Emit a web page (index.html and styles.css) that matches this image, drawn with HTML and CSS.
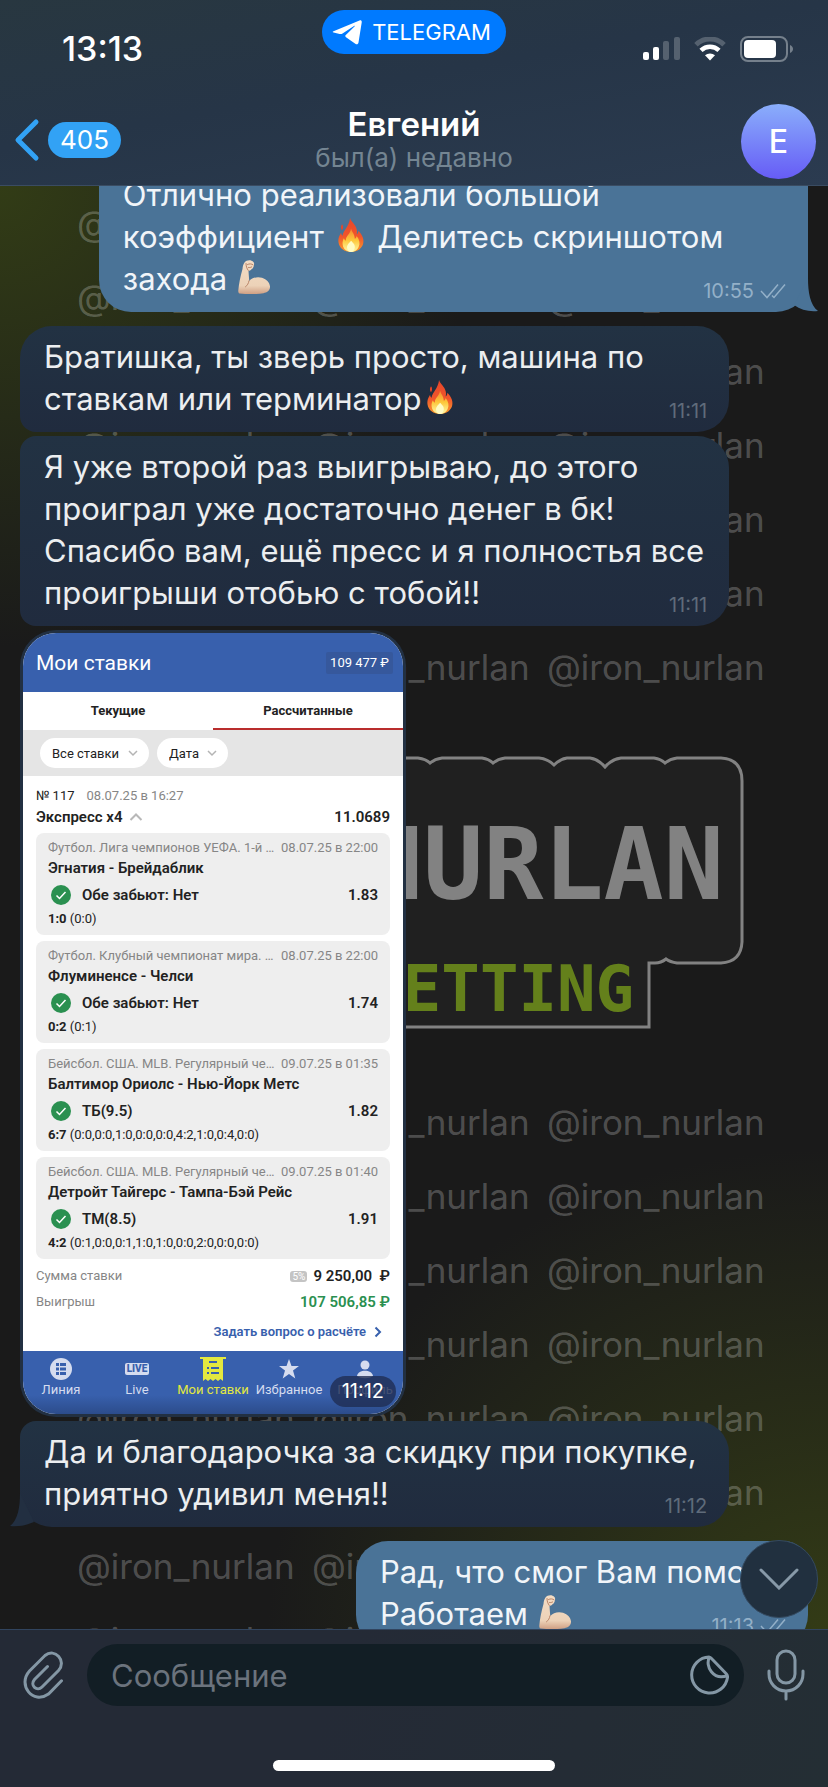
FILE: index.html
```html
<!DOCTYPE html>
<html lang="ru">

<head>
    <meta charset="UTF-8">
    <meta name="viewport" content="width=device-width, initial-scale=1">
    <title>Евгений</title>
    <link rel="stylesheet" href="styles.css">
</head>

<body>
    <!-- Shared icons -->
    <svg class="sprite" aria-hidden="true">
        <defs>
            <linearGradient id="flameOuter" x1="0" y1="0" x2="0" y2="1">
                <stop offset="0" stop-color="#e8452a" />
                <stop offset="0.55" stop-color="#f0562b" />
                <stop offset="1" stop-color="#fb9a2c" />
            </linearGradient>
            <linearGradient id="flameInner" x1="0" y1="0" x2="0" y2="1">
                <stop offset="0" stop-color="#f5862f" />
                <stop offset="0.5" stop-color="#fdc73a" />
                <stop offset="1" stop-color="#fff9a8" />
            </linearGradient>
            <linearGradient id="skin" x1="0" y1="0" x2="0" y2="1">
                <stop offset="0" stop-color="#f3dcc4" />
                <stop offset="0.75" stop-color="#ecd2b8" />
                <stop offset="1" stop-color="#cf9f83" />
            </linearGradient>
        </defs>
        <symbol id="fire" viewBox="0 0 28 36">
            <path fill="url(#flameOuter)" d="M13 0c1 4 6 7 7 12 .6 2.500.3 4 0 5.500 1-.8 1.800-2 1.800-4C25 17 28 21 27 26.500 26 32 21 36 14 36S1.500 32 .8 26C.2 21 2 18 3.500 15.500c.2 1.600.6 2.500 1.500 3.200C6 13 12 9 13 0z" />
            <path fill="#e8452a" d="M4.500 6.500C6 8 5.800 11 4.500 13 3 11.500 3 8.500 4.500 6.500z" />
            <path fill="url(#flameInner)" d="M14 11c1 4 4 6 4 11 1-.5 1.800-1.500 2-3 3 4 4 8 2 12-1.500 3-4.500 5-8 5s-7-2-8.300-5.500C4.500 27 5 24 6.500 21.500c.5 1.500 1 2 2 2.500C8.500 18 13.500 17 14 11z" />
            <path fill="#fffbc4" d="M14 24c2.500 2.500 4.500 4 4 7.500-.4 2.500-2 4.500-4 4.500s-4-2-4.200-4.500C9.600 28 12 27 14 24z" />
        </symbol>
        <symbol id="arm" viewBox="0 0 32 34">
            <path fill="url(#skin)" d="M6.500 2.500C8 .5 11.500-.2 13.500.8c2 .6 3 2 2.500 4-.2 2-1 4-2.800 4.700-.9 1-1.700 1.300-2.700 1.500C10.800 15 11 18.500 11.300 21c2.700-3.200 8-4.800 12.700-3.200 5 1.700 8.200 5.500 8 9.500-.3 3.500-3 5.200-6.500 5.900C18 34.500 8 34.300 1.500 33.500.5 33.200.2 32 .3 30.500.8 24 2.500 16 4.500 9c.2-2.500.7-4.700 2-6.500z" />
            <path fill="none" stroke="#b98468" stroke-width="1" stroke-linecap="round" d="M11 20.800c-.5 2.500-1.500 4.500-3.500 6M9.500 4.500c2-1 4-.8 5.500.3M10.500 7.500c1.200.2 2.300 0 3.200-.6M8 3.500c0 2.500.7 5 2.300 7" />
        </symbol>
        <symbol id="ticks" viewBox="0 0 26 16">
            <path fill="none" stroke="currentColor" stroke-width="1.500" d="M1 8l6 6.500L18 1.500M12 12.500l2 2L25 1.500" />
        </symbol>
        <symbol id="check" viewBox="0 0 20 20">
            <circle cx="10" cy="10" r="10" fill="#2a9050" />
            <path fill="none" stroke="#fff" stroke-width="1.500" d="M5.500 10.500l3 3 6-6.500" />
        </symbol>
        <symbol id="down" viewBox="0 0 10 8">
            <path fill="none" stroke="#b4b4b4" stroke-width="1.500" d="M1 2l4 4 4-4" />
        </symbol>
    </svg>

    <div class="screen">
        <header class="header">
            <div class="status-bar">
                <span class="clock">13:13</span>
                <a class="app-pill" href="#telegram">
                    <svg width="30" height="25" viewBox="0 0 30 25" aria-hidden="true">
                        <path fill="#fff" d="M1.500 11.200L27.500.4c1.500-.6 2.500.3 2.200 2L26.500 22.500c-.3 1.800-1.700 2.300-3.200 1.300L14 17.300c-1-.7-1-1.500-.2-2.300L22.500 6.500c.5-.5.100-.9-.5-.5L10.500 13.500c-1 .6-1.800.7-2.900.4L1.600 12.500c-1.200-.3-1.100-.9-.1-1.300z" />
                    </svg>
                    TELEGRAM
                </a>
                <div class="status-icons">
                    <svg width="37" height="24" viewBox="0 0 37 24" aria-hidden="true">
                        <rect x="0" y="15" width="6" height="8" rx="2" fill="#fff" />
                        <rect x="10" y="10" width="6" height="13" rx="2" fill="#fff" />
                        <rect x="20" y="4" width="6" height="19" rx="2" fill="#55616f" />
                        <rect x="31" y="0" width="6" height="23" rx="2" fill="#55616f" />
                    </svg>
                    <svg width="32" height="24" viewBox="0 0 32 24" aria-hidden="true">
                        <path fill="none" stroke="#55616f" stroke-width="5" d="M2 7.700a20 20 0 0 1 28 0" />
                        <path fill="none" stroke="#fff" stroke-width="4.500" d="M7 13.300a13 13 0 0 1 18 0" />
                        <path fill="#fff" d="M16 23.500l-5-5.200a7.500 7.500 0 0 1 10 0z" />
                    </svg>
                    <svg width="54" height="26" viewBox="0 0 54 26" aria-hidden="true">
                        <rect x="1" y="1" width="46" height="24" rx="7" fill="none" stroke="#75808c" stroke-width="2" />
                        <rect x="4" y="4" width="32" height="18" rx="4" fill="#fff" />
                        <path fill="#75808c" d="M50 9c4 1.500 4 6.500 0 8z" />
                    </svg>
                </div>
            </div>
            <nav class="nav">
                <a class="back" href="#chats" aria-label="Назад">
                    <svg width="26" height="44" viewBox="0 0 26 44" aria-hidden="true">
                        <path fill="none" stroke="#32a2f5" stroke-width="5" stroke-linecap="round" stroke-linejoin="round" d="M22 4L4 22l18 18" />
                    </svg>
                    <span class="unread">405</span>
                </a>
                <div class="peer">
                    <h1>Евгений</h1>
                    <p>был(а) недавно</p>
                </div>
                <a class="avatar" href="#profile">Е</a>
            </nav>
        </header>

        <main class="chat">
            <!-- Wallpaper -->
            <div class="wallpaper" aria-hidden="true">
                <div class="marks">
                    <span>@iron_nurlan</span><span>@iron_nurlan</span><span>@iron_nurlan</span>
                    <span>@iron_nurlan</span><span>@iron_nurlan</span><span>@iron_nurlan</span>
                    <span>@iron_nurlan</span><span>@iron_nurlan</span><span>@iron_nurlan</span>
                    <span>@iron_nurlan</span><span>@iron_nurlan</span><span>@iron_nurlan</span>
                    <span>@iron_nurlan</span><span>@iron_nurlan</span><span>@iron_nurlan</span>
                    <span>@iron_nurlan</span><span>@iron_nurlan</span><span>@iron_nurlan</span>
                    <span>@iron_nurlan</span><span>@iron_nurlan</span><span>@iron_nurlan</span>
                </div>
                <svg class="logo" width="828" height="381" viewBox="0 0 828 381">
                    <path fill="#202020" stroke="#828282" stroke-width="3" d="M360 54h58q8 1 12 5 5-4 12-5h40q7 1 11 5 5-4 12-5h34q9 1 15 7 6-6 13-7h23q8 1 15 9 7-8 16-9h33q7 1 11 5 5-4 12-5h44q21 1 21 23v161q-1 20-21 21h-44q-7-1-11-4-5 4-11 4h-6v64H360z" />
                    <text class="logo-name" x="724" y="195" text-anchor="end">NURLAN</text>
                    <text class="logo-sub" x="634" y="307" text-anchor="end">BETTING</text>
                </svg>
                <div class="marks">
                    <span>@iron_nurlan</span><span>@iron_nurlan</span><span>@iron_nurlan</span>
                    <span>@iron_nurlan</span><span>@iron_nurlan</span><span>@iron_nurlan</span>
                    <span>@iron_nurlan</span><span>@iron_nurlan</span><span>@iron_nurlan</span>
                    <span>@iron_nurlan</span><span>@iron_nurlan</span><span>@iron_nurlan</span>
                    <span>@iron_nurlan</span><span>@iron_nurlan</span><span>@iron_nurlan</span>
                    <span>@iron_nurlan</span><span>@iron_nurlan</span><span>@iron_nurlan</span>
                    <span>@iron_nurlan</span><span>@iron_nurlan</span><span>@iron_nurlan</span>
                    <span>@iron_nurlan</span><span>@iron_nurlan</span><span>@iron_nurlan</span>
                </div>
            </div>

            <div class="messages">
                <div class="bubble out wide scrolled">
                    Отлично реализовали большой<br>
                    коэффициент <svg class="emoji" role="img" aria-label="огонь"><use href="#fire" /></svg> Делитесь скриншотом<br>
                    захода <svg class="emoji" role="img" aria-label="бицепс"><use href="#arm" /></svg>
                    <span class="time">10:55 <svg class="ticks" aria-hidden="true"><use href="#ticks" /></svg></span>
                    <svg class="tail" viewBox="0 0 26 34" aria-hidden="true"><path fill="#4a7397" d="M16 0c0 14 2 27 10 33-9 1-17-1-24-6z" /></svg>
                </div>

                <div class="bubble in wide group-first">
                    Братишка, ты зверь просто, машина по<br>
                    ставкам или терминатор<svg class="emoji" role="img" aria-label="огонь"><use href="#fire" /></svg>
                    <span class="time">11:11</span>
                </div>

                <div class="bubble in wide group-middle">
                    Я уже второй раз выигрываю, до этого<br>
                    проиграл уже достаточно денег в бк!<br>
                    Спасибо вам, ещё пресс и я полностья все<br>
                    проигрыши отобью с тобой!!
                    <span class="time">11:11</span>
                </div>

                <!-- Bet slip photo -->
                <div class="photo">
                    <div class="slip">
                        <div class="slip-header">
                            <h2>Мои ставки</h2>
                            <span class="balance">109 477 ₽</span>
                        </div>
                        <div class="tabs">
                            <button type="button">Текущие</button>
                            <button type="button" class="active">Рассчитанные</button>
                        </div>
                        <div class="filters">
                            <span class="filter">
                                <select aria-label="Ставки"><option>Все ставки</option></select>
                                <svg width="10" height="8" aria-hidden="true"><use href="#down" /></svg>
                            </span>
                            <span class="filter">
                                <select aria-label="Дата"><option>Дата</option></select>
                                <svg width="10" height="8" aria-hidden="true"><use href="#down" /></svg>
                            </span>
                        </div>
                        <div class="slip-body">
                            <div class="slip-number"><span>№ 117</span><span class="muted">08.07.25 в 16:27</span></div>
                            <div class="slip-title">
                                <span>Экспресс x4</span>
                                <svg width="14" height="10" viewBox="0 0 14 10" aria-hidden="true"><path fill="none" stroke="#b8b8b8" stroke-width="2" d="M1.500 8L7 2.500 12.500 8" /></svg>
                                <span class="odds">11.0689</span>
                            </div>

                            <div class="bets">
                                <div class="bet">
                                    <div class="league"><span>Футбол. Лига чемпионов УЕФА. 1-й …</span><span>08.07.25 в 22:00</span></div>
                                    <div class="teams">Эгнатия - Брейдаблик</div>
                                    <div class="pick"><svg width="20" height="20" aria-hidden="true"><use href="#check" /></svg><span>Обе забьют: Нет</span><span class="odds">1.83</span></div>
                                    <div class="score"><b>1:0</b> (0:0)</div>
                                </div>
                                <div class="bet">
                                    <div class="league"><span>Футбол. Клубный чемпионат мира. …</span><span>08.07.25 в 22:00</span></div>
                                    <div class="teams">Флуминенсе - Челси</div>
                                    <div class="pick"><svg width="20" height="20" aria-hidden="true"><use href="#check" /></svg><span>Обе забьют: Нет</span><span class="odds">1.74</span></div>
                                    <div class="score"><b>0:2</b> (0:1)</div>
                                </div>
                                <div class="bet">
                                    <div class="league"><span>Бейсбол. США. MLB. Регулярный че…</span><span>09.07.25 в 01:35</span></div>
                                    <div class="teams">Балтимор Ориолс - Нью-Йорк Метс</div>
                                    <div class="pick"><svg width="20" height="20" aria-hidden="true"><use href="#check" /></svg><span>ТБ(9.5)</span><span class="odds">1.82</span></div>
                                    <div class="score"><b>6:7</b> (0:0,0:0,1:0,0:0,0:0,4:2,1:0,0:4,0:0)</div>
                                </div>
                                <div class="bet">
                                    <div class="league"><span>Бейсбол. США. MLB. Регулярный че…</span><span>09.07.25 в 01:40</span></div>
                                    <div class="teams">Детройт Тайгерс - Тампа-Бэй Рейс</div>
                                    <div class="pick"><svg width="20" height="20" aria-hidden="true"><use href="#check" /></svg><span>ТМ(8.5)</span><span class="odds">1.91</span></div>
                                    <div class="score"><b>4:2</b> (0:1,0:0,0:1,1:0,1:0,0:0,2:0,0:0,0:0)</div>
                                </div>
                            </div>

                            <div class="total"><span>Сумма ставки</span><span class="percent">5%</span><b>9 250,00 &nbsp;₽</b></div>
                            <div class="total"><span>Выигрыш</span><b class="win">107 506,85 ₽</b></div>
                            <a class="ask" href="#ask">Задать вопрос о расчёте
                                <svg width="8" height="12" viewBox="0 0 8 12" aria-hidden="true"><path fill="none" stroke="#3860ad" stroke-width="2" d="M1.500 1.500L6 6l-4.500 4.500" /></svg>
                            </a>
                        </div>
                        <nav class="slip-nav">
                            <a href="#line">
                                <svg width="22" height="22" viewBox="0 0 22 22" aria-hidden="true"><circle cx="11" cy="11" r="11" fill="#d5dcef" /><path fill="#3860ad" d="M6 5h3v3H6zM10 5h6v3h-6zM6 9.500h3v3H6zM10 9.500h6v3h-6zM6 14h3v3H6zM10 14h6v3h-6z" /></svg>
                                Линия
                            </a>
                            <a href="#live">
                                <span class="live">LIVE</span>
                                Live
                            </a>
                            <a href="#bets" class="active">
                                <svg width="26" height="24" viewBox="0 0 26 24" aria-hidden="true"><path fill="#e3e83f" d="M0 0h26v2h-3v22l-2.500-2-2.500 2-2.500-2-2.500 2-2.500-2L8 24l-2.500-2L3 24V2H0z" /><path fill="#3860ad" d="M9 4h8v2H9zM7 10h2v2H7zM11 10h8v2h-8zM7 15h2v2H7zM11 15h8v2h-8z" /></svg>
                                Мои ставки
                            </a>
                            <a href="#favorites">
                                <svg width="22" height="22" viewBox="0 0 22 22" aria-hidden="true"><path fill="#d5dcef" d="M11 1l2.500 7H21l-6 4.500 2.300 8L11 16l-6.300 4.500 2.300-8L1 8h7.500z" /></svg>
                                Избранное
                            </a>
                            <a href="#profile">
                                <svg width="18" height="20" viewBox="0 0 18 20" aria-hidden="true"><circle cx="9" cy="6" r="4.500" fill="#d5dcef" /><path fill="#d5dcef" d="M1 17c1-7 15-7 16 0-4 3-12 3-16 0z" /></svg>
                                Профиль
                            </a>
                        </nav>
                    </div>
                    <span class="photo-time">11:12</span>
                </div>

                <div class="bubble in wide group-last">
                    Да и благодарочка за скидку при покупке,<br>
                    приятно удивил меня!!
                    <span class="time">11:12</span>
                    <svg class="tail" viewBox="0 0 26 34" aria-hidden="true"><path fill="#222f41" d="M10 0c0 14-2 27-10 33 9 1 17-1 24-4z" /></svg>
                </div>

                <div class="bubble out last">
                    Рад, что смог Вам помочь<br>
                    Работаем <svg class="emoji" role="img" aria-label="бицепс"><use href="#arm" /></svg>
                    <span class="time">11:13 <svg class="ticks" aria-hidden="true"><use href="#ticks" /></svg></span>
                </div>
            </div>

            <button type="button" class="scroll-down" aria-label="Вниз">
                <svg width="40" height="22" viewBox="0 0 40 22" aria-hidden="true"><path fill="none" stroke="#8799a8" stroke-width="3" stroke-linecap="round" d="M2 2l18 18L38 2" /></svg>
            </button>
        </main>

        <footer class="composer">
            <div class="composer-row">
                <button type="button" class="icon-button" aria-label="Прикрепить">
                    <svg width="41" height="48" viewBox="0 0 41 48" aria-hidden="true">
                        <path fill="none" stroke="#8497a5" stroke-width="3" stroke-linecap="round" d="M24.500 15.500L11.500 28.500c-5 6 2.500 12.500 7.500 7.500L35.500 19.500C44 10 32 -3.500 22 4.500L6.500 20C-6 34 10 54 25.500 43L38.500 29.800" />
                    </svg>
                </button>
                <div class="field">
                    <input type="text" placeholder="Сообщение" aria-label="Сообщение">
                    <button type="button" class="icon-button" aria-label="Стикеры">
                        <svg width="40" height="40" viewBox="0 0 40 40" aria-hidden="true">
                            <path fill="none" stroke="#8497a5" stroke-width="3" stroke-linejoin="round" d="M19 2a18 18 0 1 0 18.500 20.500c.2-1.500 0-2.500-1-3.500L22 4c-1-1.200-1.700-2-3-2zM19.500 2c-5 9 4 24 18 18.500" />
                        </svg>
                    </button>
                </div>
                <button type="button" class="icon-button" aria-label="Голосовое сообщение">
                    <svg width="38" height="52" viewBox="0 0 38 52" aria-hidden="true">
                        <rect x="10" y="2" width="18" height="32" rx="9" fill="none" stroke="#8497a5" stroke-width="3" />
                        <path fill="none" stroke="#8497a5" stroke-width="3" stroke-linecap="round" d="M2 22v3c0 9 7 17 17 17s17-8 17-17v-3M19 42v8" />
                    </svg>
                </button>
            </div>
            <div class="home-indicator"></div>
        </footer>
    </div>
</body>

</html>
```

FILE: styles.css
```css
* {
    box-sizing: border-box;
}

body {
    margin: 0;
    background-color: #1a1a1a;
    font-family: Inter, "Liberation Sans", sans-serif;
    color: #fff;
}

h1,
h2,
p {
    margin: 0;
    font-weight: 400;
}

a {
    color: inherit;
    text-decoration: none;
}

button {
    padding: 0;
    border: none;
    background: none;
    font: inherit;
    color: inherit;
    cursor: pointer;
}

svg {
    flex: none;
}

.sprite {
    position: absolute;
    width: 0;
    height: 0;
}

.screen {
    display: flex;
    flex-direction: column;
    height: 100vh;
}

/* Header */
.header {
    flex: none;
    background: linear-gradient(170deg, #283740 0%, #263547 45%, #2b3b50 100%);
    border-bottom: 1px solid #3a4c62;
}

.status-bar {
    display: grid;
    grid-template-columns: 1fr auto 1fr;
    align-items: end;
    min-height: 65px;
    padding: 10px 34px 0;
}

.clock {
    padding-left: 28px;
    font-size: 34px;
    line-height: 32px;
    font-weight: 500;
}

.app-pill {
    align-self: start;
    display: flex;
    align-items: center;
    gap: 10px;
    height: 44px;
    padding: 0 15px 0 10px;
    border-radius: 22px;
    background-color: #007aff;
    font-size: 22px;
}

.status-icons {
    display: flex;
    align-items: center;
    justify-content: flex-end;
    gap: 14px;
    padding-bottom: 3px;
}

.nav {
    display: grid;
    grid-template-columns: 1fr auto 1fr;
    align-items: center;
    padding: 39px 12px 6px;
}

.back {
    display: flex;
    align-items: center;
    gap: 8px;
    padding: 0 0 4px 2px;
}

.unread {
    padding: 0 12px;
    border-radius: 18px;
    background-color: #32a2f5;
    font-size: 26px;
    line-height: 36px;
}

.peer {
    padding-bottom: 4px;
    text-align: center;
}

.peer h1 {
    font-size: 33px;
    line-height: 36px;
    font-weight: 600;
}

.peer p {
    font-size: 26px;
    line-height: 32px;
    color: #748592;
}

.avatar {
    justify-self: end;
    width: 75px;
    border-radius: 50%;
    background: linear-gradient(#8aaefb, #665cf6);
    font-size: 32px;
    line-height: 75px;
    font-weight: 500;
    text-align: center;
}

/* Chat */
.chat {
    position: relative;
    flex: 1;
    min-height: 0;
    overflow: hidden;
    background:
        radial-gradient(ellipse 480px 460px at 0 0, #323c16, transparent),
        radial-gradient(ellipse 560px 480px at 100% 100%, #333b16, transparent),
        #1a1a1a;
}

.wallpaper {
    position: absolute;
    inset: 0;
    overflow: hidden;
}

.marks {
    display: grid;
    grid-template-columns: repeat(3, 235px);
    padding-left: 77px;
    font-size: 35px;
    line-height: 74px;
    color: rgba(255, 255, 255, 0.24);
}

.logo {
    display: block;
}

.logo-name,
.logo-sub {
    font-family: "DejaVu Sans Mono", monospace;
    font-weight: 700;
}

.logo-name {
    font-size: 100px;
    fill: #828282;
}

.logo-sub {
    font-size: 64px;
    fill: #64801b;
}

.messages {
    position: relative;
    display: flex;
    flex-direction: column;
    align-items: flex-start;
    gap: 4px;
    margin-top: -22px;
    padding: 0 20px;
}

.bubble {
    position: relative;
    padding: 10px 24px 12px;
    border-radius: 32px;
    font-size: 31px;
    line-height: 42px;
    white-space: nowrap;
}

.wide {
    width: 90%;
}

.in {
    background: linear-gradient(#223243, #202b3e);
    color: #eceef0;
}

.out {
    align-self: flex-end;
    background-color: #4a7397;
    color: #f1f5f9;
}

/* The top of this one is scrolled under the header */
.scrolled {
    margin-bottom: 10px;
    border-top-left-radius: 16px;
    border-top-right-radius: 16px;
}

.group-first {
    border-bottom-left-radius: 16px;
}

.group-middle {
    border-top-left-radius: 16px;
    border-bottom-left-radius: 16px;
}

.group-last {
    margin-bottom: 10px;
    border-top-left-radius: 16px;
}

.last {
    min-width: 452px;
    border-top-right-radius: 24px;
}

.emoji {
    width: 32px;
    height: 34px;
    margin: 0 2px;
    vertical-align: -4px;
}

.time {
    float: right;
    display: flex;
    align-items: center;
    gap: 6px;
    margin: 18px -2px -8px 0;
    font-size: 20px;
    line-height: 30px;
    color: #5f6b7a;
}

.out .time {
    color: #93b0c8;
}

.ticks {
    width: 26px;
    height: 16px;
}

.tail {
    position: absolute;
    bottom: 0;
    width: 26px;
    height: 34px;
}

.out .tail {
    right: -10px;
}

.in .tail {
    left: -10px;
}

.scroll-down {
    position: absolute;
    right: 10px;
    bottom: 11px;
    display: flex;
    align-items: center;
    justify-content: center;
    width: 78px;
    height: 78px;
    border: 1px solid #34495f;
    border-radius: 50%;
    background-color: #21303f;
}

/* Bet slip */
.photo {
    position: relative;
    width: 386px;
    padding: 3px;
    border-radius: 36px;
    background-color: #223042;
}

.slip {
    overflow: hidden;
    border-radius: 33px;
    background-color: #fff;
    font-family: Roboto, sans-serif;
    font-size: 13px;
    color: #222;
}

.slip-header {
    display: flex;
    align-items: center;
    justify-content: space-between;
    height: 59px;
    padding: 0 10px 0 13px;
    background-color: #3860ad;
    color: #fff;
}

.slip-header h2 {
    font-size: 21px;
}

.balance {
    padding: 0 4px;
    border-radius: 2px;
    background-color: #36589c;
    line-height: 22px;
}

.tabs {
    display: grid;
    grid-template-columns: 1fr 1fr;
}

.tabs button {
    height: 38px;
    border-bottom: 2px solid transparent;
    font-weight: 700;
}

.tabs .active {
    border-color: #b92d2d;
}

.filters {
    display: flex;
    gap: 8px;
    padding: 8px 17px;
    background-color: #e5e5e5;
}

.filter {
    display: flex;
    align-items: center;
    gap: 8px;
    height: 30px;
    padding: 0 11px 0 12px;
    border-radius: 15px;
    background-color: #fff;
}

.filter select {
    padding: 0;
    border: none;
    background: none;
    appearance: none;
    font: inherit;
    color: inherit;
}

.slip-body {
    display: flex;
    flex-direction: column;
    padding: 9px 13px 2px;
}

.slip-number {
    display: flex;
    gap: 12px;
    line-height: 21px;
}

.muted,
.league,
.total span {
    color: #868686;
}

.slip-title {
    display: flex;
    align-items: center;
    gap: 7px;
    font-size: 15px;
    line-height: 22px;
    font-weight: 600;
}

.odds {
    margin-left: auto;
}

.bets {
    display: flex;
    flex-direction: column;
    gap: 6px;
    margin: 5px 0 4px;
}

.bet {
    padding: 6px 12px 8px;
    border-radius: 8px;
    background-color: #eee;
}

.league {
    display: flex;
    justify-content: space-between;
    line-height: 18px;
}

.teams {
    font-size: 15px;
    line-height: 22px;
    font-weight: 600;
}

.pick {
    display: flex;
    align-items: center;
    gap: 11px;
    padding-left: 3px;
    font-size: 15px;
    line-height: 32px;
    font-weight: 600;
}

.score {
    line-height: 16px;
}

.total {
    display: flex;
    align-items: center;
    gap: 6px;
    line-height: 26px;
}

.total b {
    font-size: 15px;
    font-weight: 600;
}

.total span:first-child {
    margin-right: auto;
}

.total .percent {
    padding: 0 2px;
    border-radius: 3px;
    background-color: #c4c4c4;
    font-size: 10px;
    line-height: 11px;
    color: #fff;
}

.total .win {
    color: #2a9050;
}

.ask {
    display: flex;
    align-items: center;
    justify-content: flex-end;
    gap: 8px;
    padding-right: 8px;
    line-height: 34px;
    font-weight: 600;
    color: #3860ad;
}

.slip-nav {
    display: grid;
    grid-template-columns: repeat(5, 1fr);
    height: 63px;
    background: linear-gradient(#3860ad 70%, #2c4c8b);
}

.slip-nav a {
    display: grid;
    grid-template-rows: 24px 16px;
    align-content: start;
    align-items: center;
    justify-items: center;
    padding-top: 6px;
    color: #d5dcef;
    white-space: nowrap;
}

.slip-nav .active {
    color: #e3e83f;
}

.live {
    padding: 0 2px;
    border-radius: 2px;
    background-color: #d5dcef;
    font-size: 10px;
    line-height: 12px;
    font-weight: 900;
    color: #3860ad;
}

.photo-time {
    position: absolute;
    right: 10px;
    bottom: 10px;
    padding: 0 12px;
    border-radius: 16px;
    background-color: rgba(31, 45, 82, 0.8);
    font-size: 20px;
    line-height: 31px;
}

/* Composer */
.composer {
    flex: none;
    border-top: 1px solid #31445e;
    background: linear-gradient(110deg, #242a36 40%, #242e34 100%);
    padding: 14px 23px 16px;
}

.composer-row {
    display: flex;
    align-items: center;
    gap: 23px;
}

.icon-button {
    display: flex;
}

.field {
    flex: 1;
    display: flex;
    align-items: center;
    min-width: 0;
    height: 62px;
    padding: 0 14px 0 24px;
    border-radius: 31px;
    background-color: #121e25;
}

.field input {
    flex: 1;
    min-width: 0;
    padding: 0;
    border: none;
    background: none;
    font: inherit;
    font-size: 31px;
    color: #fff;
    outline: none;
}

.field input::placeholder {
    color: #6b737d;
    opacity: 1;
}

.home-indicator {
    width: 36%;
    height: 11px;
    margin: 54px auto 0;
    border-radius: 6px;
    background-color: #fff;
}
```
